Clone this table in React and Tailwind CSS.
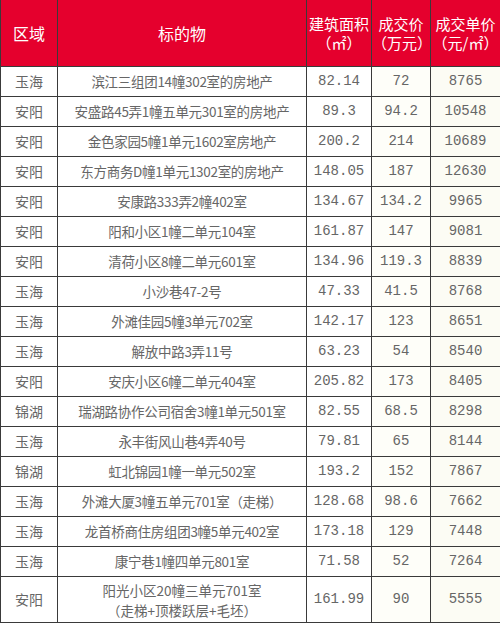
import React from "react";

const rows = [
  ["玉海", "滨江三组团14幢302室的房地产", "82.14", "72", "8765"],
  ["安阳", "安盛路45弄1幢五单元301室的房地产", "89.3", "94.2", "10548"],
  ["安阳", "金色家园5幢1单元1602室房地产", "200.2", "214", "10689"],
  ["安阳", "东方商务D幢1单元1302室的房地产", "148.05", "187", "12630"],
  ["安阳", "安康路333弄2幢402室", "134.67", "134.2", "9965"],
  ["安阳", "阳和小区1幢二单元104室", "161.87", "147", "9081"],
  ["安阳", "清荷小区8幢二单元601室", "134.96", "119.3", "8839"],
  ["玉海", "小沙巷47-2号", "47.33", "41.5", "8768"],
  ["玉海", "外滩佳园5幢3单元702室", "142.17", "123", "8651"],
  ["玉海", "解放中路3弄11号", "63.23", "54", "8540"],
  ["安阳", "安庆小区6幢二单元404室", "205.82", "173", "8405"],
  ["锦湖", "瑞湖路协作公司宿舍3幢1单元501室", "82.55", "68.5", "8298"],
  ["玉海", "永丰街风山巷4弄40号", "79.81", "65", "8144"],
  ["锦湖", "虹北锦园1幢一单元502室", "193.2", "152", "7867"],
  ["玉海", "外滩大厦3幢五单元701室（走梯）", "128.68", "98.6", "7662"],
  ["玉海", "龙首桥商住房组团3幢5单元402室", "173.18", "129", "7448"],
  ["玉海", "康宁巷1幢四单元801室", "71.58", "52", "7264"],
];

const base = "flex items-center justify-center text-center border-r border-b border-[#3a3a3a]";
const cjk = " font-['Noto_Sans_CJK_SC',sans-serif]";
const mono = " font-['Liberation_Mono','Noto_Sans_CJK_SC',monospace] text-[14px]";
const head = " bg-[#e5002d] text-white text-[15px] leading-[19px] flex-col" + cjk;

export default function App() {
  return (
    <div className="w-[500px] h-[623px] overflow-hidden bg-white">
      <div className="grid grid-cols-[58px_249px_65px_59px_69px] grid-rows-[67px_repeat(17,30px)_46px] text-[#666]">
        <div className={base + head + " text-[16px] border-l"}>区域</div>
        <div className={base + head + " text-[16px]"}>标的物</div>
        <div className={base + head}>
          <span>建筑面积</span>
          <span>（㎡）</span>
        </div>
        <div className={base + head}>
          <span>成交价</span>
          <span>（万元）</span>
        </div>
        <div className={base + head + " border-r-0"}>
          <span>成交单价</span>
          <span>（元/㎡）</span>
        </div>

        {rows.map((r, i) => (
          <React.Fragment key={i}>
            <div className={base + cjk + " text-[14px] border-l"}>{r[0]}</div>
            <div className={base + cjk + " text-[13.5px] tracking-[-0.3px] whitespace-nowrap"}>{r[1]}</div>
            <div className={base + mono}>{r[2]}</div>
            <div className={base + mono + " bg-[#fefef9]"}>{r[3]}</div>
            <div className={base + mono + " bg-[#fcfcf4] border-r-0"}>{r[4]}</div>
          </React.Fragment>
        ))}

        <div className={base + cjk + " text-[14px] border-l"}>安阳</div>
        <div className={base + cjk + " text-[13.5px] leading-[20px] flex-col"}>
          <span>阳光小区20幢三单元701室</span>
          <span>（走梯+顶楼跃层+毛坯）</span>
        </div>
        <div className={base + mono}>161.99</div>
        <div className={base + mono + " bg-[#fefef9]"}>90</div>
        <div className={base + mono + " bg-[#fcfcf4] border-r-0"}>5555</div>
      </div>
    </div>
  );
}
